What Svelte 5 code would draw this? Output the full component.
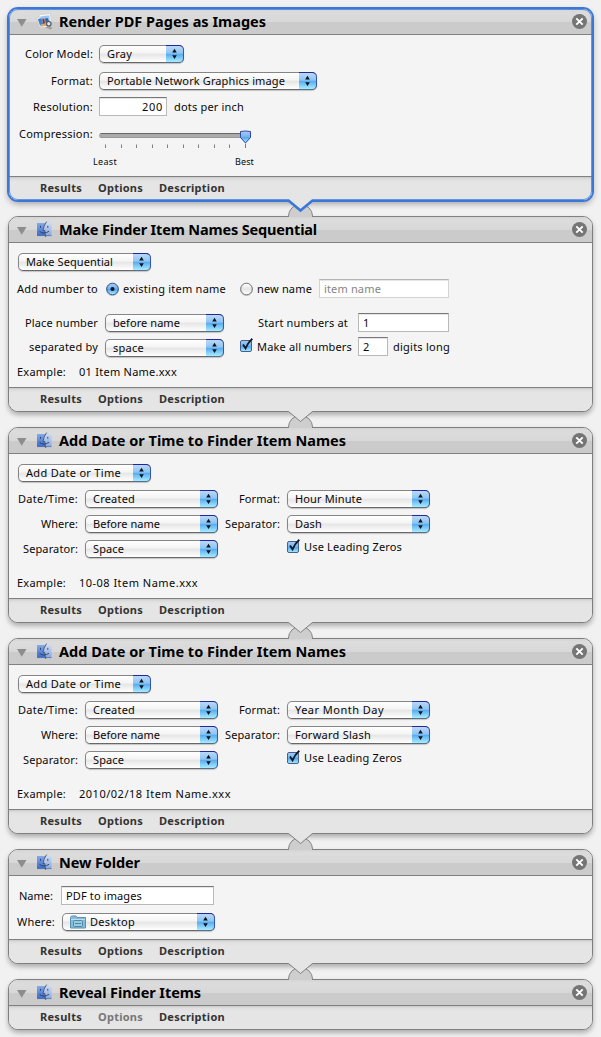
<script>
  // Spreads a label's letters so that it fills the given width.
  function fit(node, width) {
    const natural = node.getBoundingClientRect().width;
    const count = node.textContent.length;
    node.style.letterSpacing = (width - natural) / count + 'px';
  }

  const actions = [
    { kind: 'render', title: 'Render PDF Pages as Images', tw: 207, body: 141, selected: true },
    { kind: 'sequential', title: 'Make Finder Item Names Sequential', tw: 258, body: 144 },
    { kind: 'date', title: 'Add Date or Time to Finder Item Names', tw: 287, body: 144,
      format: ['Hour Minute', 67], sep: ['Dash', 27], example: ['10-08 Item Name.xxx', 120] },
    { kind: 'date', title: 'Add Date or Time to Finder Item Names', tw: 287, body: 144,
      format: ['Year Month Day', 89], sep: ['Forward Slash', 76], example: ['2010/02/18 Item Name.xxx', 153] },
    { kind: 'folder', title: 'New Folder', tw: 81, body: 63 },
    { kind: 'reveal', title: 'Reveal Finder Items', tw: 142, body: 0 }
  ];
  const ticks = [6.5, 22.5, 37.5, 53.5, 68.5, 84.5, 99.5, 115.5, 130.5, 146.5];
</script>

{#snippet t(text, w)}<span class="t" use:fit={w}>{text}</span>{/snippet}

{#snippet label(text, w, box)}
  <span class="label" style:width="{box}px">{@render t(text, w)}</span>
{/snippet}

{#snippet popup(text, w, box, gap = 0, folder = false)}
  <div class="popup" class:with-icon={folder} style:width="{box}px" style:margin-left="{gap}px">
    <span class="value">
      {#if folder}
        <svg class="folder" width="16" height="14" viewBox="0 0 16 14">
          <path d="M.5 13V2.5L1.500 1H6l1 1.500h8.500V13z" fill="#87bbd6" stroke="#5792b4" />
          <path d="M1 4.500h14" stroke="#b9dcec" />
          <rect x="3.500" y="5.500" width="9" height="6" rx="1" fill="#9accdf" stroke="#4e89ac" />
          <path d="M5 8.500h6" stroke="#4e89ac" />
        </svg>
      {/if}
      {@render t(text, w)}
    </span>
    <span class="arrows">
      <svg width="18" height="18" viewBox="0 0 18 18">
        <path d="M8.500 3.800L10.800 7.400H6.200zM8.500 13.900L10.800 10.300H6.200z" fill="#08131f" />
      </svg>
    </span>
  </div>
{/snippet}

{#snippet field(text, w, box, gap, cls = '')}
  <div class="field {cls}" style:width="{box}px" style:margin-left="{gap}px">{@render t(text, w)}</div>
{/snippet}

{#snippet check(gap)}
  <svg class="check" style:margin-left="{gap}px" width="13" height="15" viewBox="0 0 13 15">
    <rect x=".5" y="2.500" width="11" height="11" rx="1.500" fill="url(#aqua)" stroke="#43618c" />
    <path d="M3 6.500L5.500 10.300Q8 4.500 12.300.8" fill="none" stroke="#111c2b" stroke-width="1.900" />
  </svg>
{/snippet}

{#snippet radio(on, gap)}
  <svg style:margin-left="{gap}px" width="13" height="14" viewBox="0 0 13 14">
    <circle cx="6.500" cy="7.700" r="6" fill="none" stroke="#bbb" stroke-width=".8" />
    <circle cx="6.500" cy="7" r="5.800" fill={on ? 'url(#aqua)' : 'url(#silver)'} stroke={on ? '#31508f' : '#747474'} />
    {#if on}<circle cx="6.500" cy="7" r="2.100" fill="#0c1a2c" />{/if}
  </svg>
{/snippet}

{#snippet finder()}
  <svg class="icon" width="17" height="17" viewBox="0 0 17 17">
    <rect x="1" y="2" width="14.500" height="13" rx=".6" fill="url(#pale)" />
    <path d="M1 2h8.500Q7.200 6 7 9.500h1.800q0 3 .6 5.500H1z" fill="url(#face)" />
    <path d="M1 14.600h14.500" stroke="#5b76b4" stroke-width=".8" />
    <path d="M10.600.6Q7.400 5 7 9.500h1.900q0 3.500.9 6.500" fill="none" stroke="#4a5568" stroke-width=".9" />
    <path d="M4.500 4.800v2M11.800 4.800v2M3.500 10.300q4.200 3.400 9.500 0" fill="none" stroke="#2c3d5e" stroke-width=".9" />
  </svg>
{/snippet}

{#snippet preview()}
  <svg class="icon preview" width="17" height="17" viewBox="0 0 17 17">
    <path d="M.5 5L5 3.200 8 12.500 3.200 14z" fill="#f7f5ef" stroke="#bcb8b0" stroke-width=".5" />
    <path d="M3 1.800L14.300.5l1.700 12.300L4.600 15z" fill="#fafafa" stroke="#bdbdbd" stroke-width=".5" />
    <path d="M4.200 3.600l9-1.400 1.200 8.800-8.400 2z" fill="#9cc4f0" />
    <path d="M1.800 6.200L5.200 5l2 6.500-3.200 1z" fill="#4580c8" />
    <path d="M6.200 6l2-.4 1 5.400-2 .5z" fill="#7d4030" />
    <path d="M4.600 11.400l6.700-1.600.6 2.500-6.600 1.400z" fill="#e0a46c" />
    <path d="M9 5.500l2.500-.5 1.500 3-3.500 2z" fill="#3c649c" />
    <circle cx="12.800" cy="10.800" r="2.300" fill="#dde3e8" stroke="#505359" stroke-width="1.200" />
    <path d="M9.500 14.500l3.500-1.500 3.500 2-2 1.500z" fill="#8c8c8c" opacity=".7" />
  </svg>
{/snippet}

<svg class="defs" width="0" height="0">
  <defs>
    <linearGradient id="aqua" x1="0" y1="0" x2="0" y2="1">
      <stop offset="0" stop-color="#a9ccf4" /><stop offset=".48" stop-color="#76b4ef" />
      <stop offset=".5" stop-color="#4da2ea" /><stop offset="1" stop-color="#acecff" />
    </linearGradient>
    <linearGradient id="silver" x1="0" y1="0" x2="0" y2="1">
      <stop offset="0" stop-color="#fff" /><stop offset=".5" stop-color="#e5e5e5" /><stop offset="1" stop-color="#fff" />
    </linearGradient>
    <linearGradient id="face" x1="0" y1="0" x2="0" y2="1">
      <stop offset="0" stop-color="#86aae8" /><stop offset="1" stop-color="#3769c8" />
    </linearGradient>
    <linearGradient id="pale" x1="0" y1="0" x2="0" y2="1">
      <stop offset="0" stop-color="#cddaf3" /><stop offset="1" stop-color="#86a4dd" />
    </linearGradient>
  </defs>
</svg>

<main>
  {#each actions as a, i}
    <section class="card" class:selected={a.selected}>
      {#if i > 0}
        <svg class="bump" width="26" height="13" viewBox="0 0 26 13">
          <path d="M.5 13V12A12 11.500 0 0 1 24.500 12V13" fill="#cecece" stroke="#858585" />
        </svg>
      {/if}
      <header>
        <svg class="twisty" width="10" height="8" viewBox="0 0 10 8"><path d="M0 0h9.500L4.750 7.800z" fill="#8d8d8d" /></svg>
        {#if a.kind === 'render'}{@render preview()}{:else}{@render finder()}{/if}
        <h2>{@render t(a.title, a.tw)}</h2>
        <svg class="close" width="15" height="15" viewBox="0 0 15 15">
          <circle cx="7.500" cy="7.500" r="7.500" fill="#757575" />
          <path d="M4.300 4.300l6.400 6.400M10.700 4.300l-6.400 6.400" stroke="#fff" stroke-width="1.900" />
        </svg>
      </header>

      {#if a.body}
        <div class="body" style:height="{a.body}px">
          {#if a.kind === 'render'}
            <div class="row" style:margin-top="10px">{@render label('Color Model:', 68, 84)}{@render popup('Gray', 25, 85, 6)}</div>
            <div class="row" style:margin-top="9px">{@render label('Format:', 42, 84)}{@render popup('Portable Network Graphics image', 178, 218, 6)}</div>
            <div class="row tall" style:margin-top="7px">
              {@render label('Resolution:', 60, 84)}{@render field('200', 21, 68, 6, 'number')}
              <span style:margin-left="7px">{@render t('dots per inch', 70)}</span>
            </div>
            <div class="row slider-row">
              {@render label('Compression:', 74, 84)}
              <div class="slider">
                <svg width="160" height="20" viewBox="0 0 160 20">
                  <rect x="0" y="3" width="152" height="5" rx="2.500" fill="#aaa" />
                  <path d="M1.500 3.500H150" stroke="#686868" />
                  <path d="M1.500 7.500H150" stroke="#999" />
                  {#each ticks as x}<path d="M{x} 14.500v3.500" stroke="#808080" />{/each}
                  <path d="M141.500 1.500q5-1 10 0v6l-5 5.500-5-5.500z" fill="url(#aqua)" stroke="#31479f" stroke-linejoin="round" />
                  <path d="M146.500 13.500v4.500" stroke="#777" />
                </svg>
                <div class="captions">{@render t('Least', 24)}{@render t('Best', 19)}</div>
              </div>
            </div>
          {:else if a.kind === 'sequential'}
            <div class="row" style:margin-top="10px">{@render popup('Make Sequential', 87, 133, 9)}</div>
            <div class="row tall" style:margin-top="8px">
              {@render label('Add number to', 81, 89)}{@render radio(true, 8)}
              <span style:margin-left="4px">{@render t('existing item name', 103)}</span>
              {@render radio(false, 14)}
              <span style:margin-left="4px">{@render t('new name', 55)}</span>
              {@render field('item name', 57, 130, 7, 'disabled')}
            </div>
            <div class="row tall" style:margin-top="15px">
              {@render label('Place number', 73, 89)}
              <div class="low">{@render popup('before name', 67, 119, 7)}</div>
              {@render label('Start numbers at', 90, 124)}{@render field('1', 7, 91, 10)}
            </div>
            <div class="row tall" style:margin-top="5px">
              {@render label('separated by', 69, 89)}
              <div class="lower">{@render popup('space', 31, 119, 7)}</div>
              {@render check(16)}
              <span style:margin-left="4px">{@render t('Make all numbers', 95)}</span>
              {@render field('2', 7, 30, 6)}
              <span style:margin-left="5px">{@render t('digits long', 57)}</span>
            </div>
            <div class="row" style:margin-top="7px">{@render label('Example:', 49, 57)}<span style:margin-left="13px">{@render t('01 Item Name.xxx', 98)}</span></div>
          {:else if a.kind === 'date'}
            <div class="row" style:margin-top="10px">{@render popup('Add Date or Time', 95, 133, 9)}</div>
            <div class="row" style:margin-top="8px">
              {@render label('Date/Time:', 60, 69)}{@render popup('Created', 42, 133, 7)}
              {@render label('Format:', 41, 62)}{@render popup(a.format[0], a.format[1], 143, 7)}
            </div>
            <div class="row" style:margin-top="7px">
              {@render label('Where:', 37, 69)}{@render popup('Before name', 67, 133, 7)}
              {@render label('Separator:', 55, 62)}{@render popup(a.sep[0], a.sep[1], 143, 7)}
            </div>
            <div class="row" style:margin-top="7px">
              {@render label('Separator:', 55, 69)}{@render popup('Space', 31, 133, 7)}
              <div class="zeros">{@render check(69)}<span style:margin-left="4px">{@render t('Use Leading Zeros', 98)}</span></div>
            </div>
            <div class="row" style:margin-top="16px">{@render label('Example:', 49, 57)}<span style:margin-left="13px">{@render t(a.example[0], a.example[1] - 1)}</span></div>
          {:else}
            <div class="row tall" style:margin-top="10px">{@render label('Name:', 34, 44)}{@render field('PDF to images', 76, 153, 8)}</div>
            <div class="row" style:margin-top="8px">{@render label('Where:', 38, 46)}{@render popup('Desktop', 45, 153, 7, true)}</div>
          {/if}
        </div>
      {/if}

      <footer>
        {@render t('Results', 42)}
        <span class:dim={a.kind === 'reveal'}>{@render t('Options', 45)}</span>
        {@render t('Description', 66)}
      </footer>
      {#if i < actions.length - 1}
        <svg class="notch" width="27" height="14" viewBox="0 0 27 14">
          <path d="M0 0V1.500H1.500L13.500 11.500L25.500 1.500H27V0z" fill="#e5e5e5" />
          <path d="M0 1.500H1.500L13.500 11.500L25.500 1.500H27" fill="none" stroke={a.selected ? '#3a77d8' : '#7f7f7f'} stroke-width={a.selected ? 2.600 : 1} />
        </svg>
      {/if}
    </section>
  {/each}
</main>

<style>
  :global(body) { background: #f1f1f1; }
  main {
    box-sizing: border-box;
    width: 601px;
    height: 1037px;
    overflow: hidden;
    padding: 8px;
    display: flex;
    flex-direction: column;
    gap: 15px;
    font: 11px/16px "Noto Sans", sans-serif;
    color: #080808;
  }
  .defs { position: absolute; }
  svg { display: block; flex: none; }
  .t { display: inline-block; white-space: pre; }
  .card {
    position: relative;
    box-sizing: border-box;
    width: 585px;
    flex: none;
    border: 1px solid #7f7f7f;
    border-radius: 10px;
    background: #f4f4f4;
    box-shadow: 0 3px 5px rgba(0, 0, 0, .28);
  }
  .selected {
    border-color: #3a77d8;
    box-shadow: 0 0 0 1px #3a77d8, 0 3px 6px rgba(0, 0, 0, .32);
  }
  .selected::after {
    content: "";
    position: absolute;
    inset: 0;
    border: 1px solid rgba(58, 119, 216, .75);
    border-radius: 9px;
  }
  header {
    box-sizing: border-box;
    height: 26px;
    display: flex;
    align-items: center;
    padding: 0 5px 0 8px;
    border-bottom: 1px solid #808080;
    border-radius: 9px 9px 0 0;
    background: linear-gradient(#d4d4d4 0, #dcdcdc 3px, #d8d8d8 50%, #cbcbcb 51%, #cbcbcb);
  }
  .twisty { margin-top: 2px; }
  .icon { margin: 0 0 0 9px; }
  .preview { margin-top: -1px; }
  h2 { margin: -2px auto 0 6px; font: bold 14.500px/22px "Noto Sans", sans-serif; color: #000; }
  .body { box-sizing: border-box; overflow: hidden; }
  .row { display: flex; align-items: center; height: 18px; }
  .tall { height: 19px; }
  .label { flex: none; text-align: right; }
  .low { padding-top: 1px; }
  .lower { padding-top: 3px; }
  .popup {
    position: relative;
    box-sizing: border-box;
    flex: none;
    display: flex;
    height: 18px;
    border: 1px solid #858585;
    border-bottom-color: #686868;
    border-radius: 5px;
    background: linear-gradient(#fff, #f4f4f4 45%, #e5e5e5 50%, #fff);
    box-shadow: 0 1px 1px rgba(0, 0, 0, .2);
  }
  .value { flex: 1; display: flex; align-items: center; padding-left: 7px; }
  .with-icon .value { gap: 4px; }
  .arrows {
    box-sizing: border-box;
    width: 18px;
    height: 18px;
    margin: -1px;
    border: 1px solid #24259d;
    border-left: 0;
    border-right-color: #3558a5;
    border-bottom-color: #596f89;
    border-radius: 0 5px 5px 0;
    background: linear-gradient(#bad9f7, #8dc3f3 46%, #55aaee 50%, #a8ecff);
  }
  .arrows svg { margin-top: -1px; }
  .field {
    box-sizing: border-box;
    flex: none;
    height: 19px;
    padding: 0 3px 0 4px;
    border: 1px solid #b9b9b9;
    border-top-color: #777;
    background: #fff;
    box-shadow: inset 0 1px #e6e6e6;
    line-height: 18px;
  }
  .number { text-align: right; }
  .disabled { color: #858585; border-color: #d4d4d4; border-top-color: #b5b5b5; }
  .slider-row { align-items: flex-start; height: 40px; margin-top: 12px; }
  .slider-row .label { margin-top: -2px; }
  .slider { width: 160px; margin: 2px 0 0 6px; }
  .captions { display: flex; justify-content: space-between; width: 161px; margin: 4px 0 0 -6px; font-size: 9px; line-height: 16px; }
  .check { margin-top: -3px; }
  .zeros { display: flex; align-items: center; height: 16px; margin-top: -5px; }
  .zeros .check { margin-top: -1px; }
  footer {
    box-sizing: border-box;
    display: flex;
    align-items: center;
    gap: 16px;
    height: 24px;
    padding: 0 0 2px 31px;
    border-top: 1px solid #808080;
    border-radius: 0 0 9px 9px;
    background: linear-gradient(#c9c9c9, #dedede 2px, #e5e5e5 5px);
    font-weight: bold;
    color: #333;
  }
  header + footer { border-top: 0; height: 23px; }
  .dim { color: #777; }
  .bump { position: absolute; left: 279px; top: -13px; }
  .notch { position: absolute; left: 278px; bottom: -13px; z-index: 2; }
</style>
